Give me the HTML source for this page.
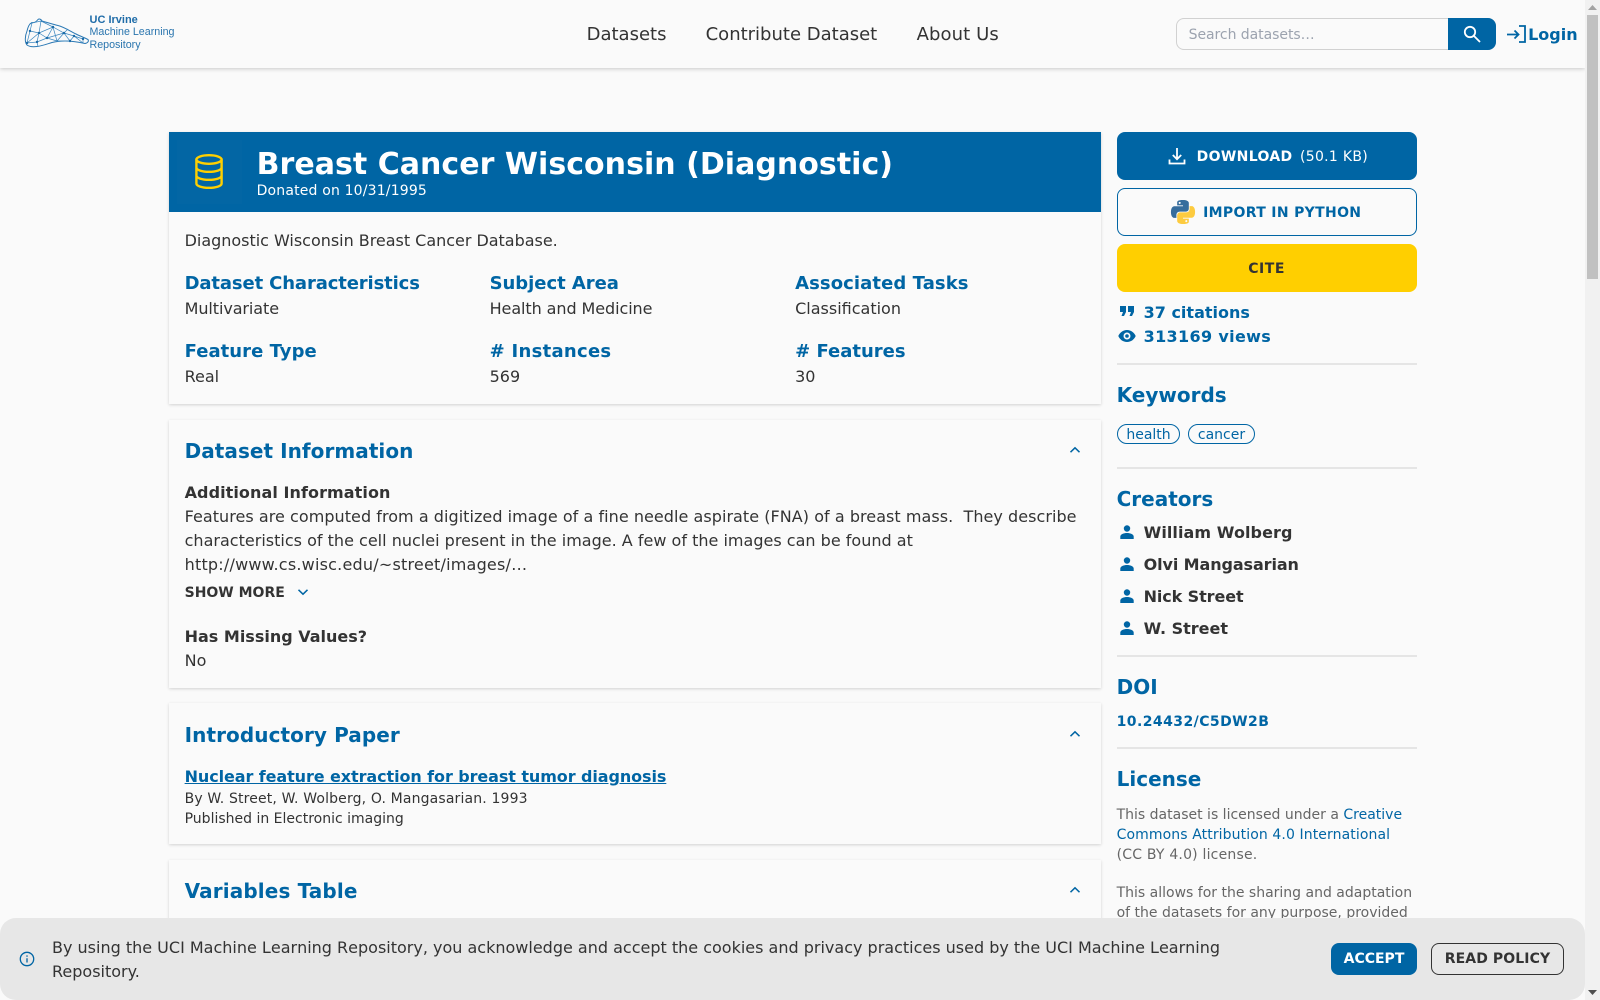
<!DOCTYPE html>
<html lang="en"><head><meta charset="utf-8"><title>Breast Cancer Wisconsin (Diagnostic)</title>
<style>
html,body{margin:0;padding:0;width:1600px;height:1000px;overflow:hidden;background:#fafafa}
body{position:relative;font-family:"DejaVu Sans",sans-serif;font-size:16px;color:#333}
#w{position:absolute;left:0;top:0;width:1600px;height:1000px;overflow:hidden}
.t{position:absolute;white-space:nowrap;line-height:24px;margin-top:1px;margin-left:-.4px}
.b{font-weight:700}
.h{font-weight:700;color:#0065a4;font-size:18px}
.h2{font-weight:700;color:#0065a4;font-size:20px;margin-top:0}
.s{font-size:14px}
.card{position:absolute;left:169px;width:932px;background:#fafafa;box-shadow:0 1px 3px rgba(0,0,0,.16)}
.btn{position:absolute;left:1117px;width:300px;height:48px;border-radius:8px;box-sizing:border-box}
.hr{position:absolute;left:1117px;width:300px;height:2px;background:#e5e5e5}
.blue{color:#0065a4}
svg{position:absolute;overflow:visible}
a{color:inherit}
</style></head><body><div id="w">

<div class="card" style="top:132px;height:272px"></div>
<div style="position:absolute;left:169px;top:132px;width:932px;height:80px;background:#0065a4"></div>
<div style="position:absolute;left:177px;top:140px;width:65px;height:64px;background:#0366a4"></div>
<svg style="left:195px;top:154px" width="28" height="35" viewBox="0 0 28 35" fill="none" stroke="#ffcf00" stroke-width="2.4"><ellipse cx="14" cy="5.5" rx="12.6" ry="4.3"/><path d="M1.4 5.5V29.5C1.4 32 7 33.8 14 33.8S26.6 32 26.6 29.5V5.5M1.4 13.5C1.4 16 7 17.8 14 17.8S26.6 16 26.6 13.5M1.4 21.5C1.4 24 7 25.8 14 25.8S26.6 24 26.6 21.5"/></svg>
<div class="t b" style="left:257px;top:146px;font-size:30px;line-height:36px;color:#fff;letter-spacing:.03px">Breast Cancer Wisconsin (Diagnostic)</div>
<div class="t s" style="left:257px;top:178px;color:#fff;letter-spacing:.17px">Donated on 10/31/1995</div>

<div class="t" style="left:185px;top:228px;letter-spacing:-.02px">Diagnostic Wisconsin Breast Cancer Database.</div>
<div class="t h" style="left:185px;top:271px;letter-spacing:-.133px">Dataset Characteristics</div>
<div class="t h" style="left:490px;top:271px;letter-spacing:-.04px">Subject Area</div>
<div class="t h" style="left:795.500px;top:271px;letter-spacing:.08px">Associated Tasks</div>
<div class="t" style="left:185px;top:296px;letter-spacing:-.08px">Multivariate</div>
<div class="t" style="left:490px;top:296px;letter-spacing:-.08px">Health and Medicine</div>
<div class="t" style="left:795.500px;top:296px">Classification</div>
<div class="t h" style="left:185px;top:339px;letter-spacing:.04px">Feature Type</div>
<div class="t h" style="left:490px;top:339px;letter-spacing:.28px"># Instances</div>
<div class="t h" style="left:795.500px;top:339px">&#35; Features</div>
<div class="t" style="left:185px;top:364px">Real</div>
<div class="t" style="left:490px;top:364px">569</div>
<div class="t" style="left:795.500px;top:364px">30</div>

<div class="card" style="top:420px;height:268px"></div>
<div class="t h2" style="left:185px;top:439px;letter-spacing:.05px">Dataset Information</div>
<svg style="left:1069px;top:444px" width="12" height="12" viewBox="0 0 12 12" fill="none" stroke="#0065a4" stroke-width="1.5"><path d="M1.5 8.2 6 3.8l4.5 4.4"/></svg>
<div class="t b" style="left:185px;top:480px;letter-spacing:.07px">Additional Information</div>
<div class="t" style="left:185px;top:504px;letter-spacing:.045px">Features are computed from a digitized image of a fine needle aspirate (FNA) of a breast mass.&nbsp; They describe</div>
<div class="t" style="left:185px;top:528px;letter-spacing:.01px">characteristics of the cell nuclei present in the image. A few of the images can be found at</div>
<div class="t" style="left:185px;top:552px;letter-spacing:.21px">http://www.cs.wisc.edu/~street/images/…</div>
<div class="t b s" style="left:185px;top:580px">SHOW MORE</div>
<svg style="left:297px;top:586px" width="12" height="12" viewBox="0 0 12 12" fill="none" stroke="#0065a4" stroke-width="1.5"><path d="M1.5 3.8 6 8.2l4.5-4.4"/></svg>
<div class="t b" style="left:185px;top:624px">Has Missing Values?</div>
<div class="t" style="left:185px;top:648px">No</div>

<div class="card" style="top:703px;height:141px"></div>
<div class="t h2" style="left:185px;top:723px;letter-spacing:.08px">Introductory Paper</div>
<svg style="left:1069px;top:728px" width="12" height="12" viewBox="0 0 12 12" fill="none" stroke="#0065a4" stroke-width="1.5"><path d="M1.5 8.2 6 3.8l4.5 4.4"/></svg>
<div class="t b blue" style="left:185px;top:764px;text-decoration:underline;letter-spacing:-.087px">Nuclear feature extraction for breast tumor diagnosis</div>
<div class="t s" style="left:185px;top:786px;letter-spacing:.15px">By W. Street, W. Wolberg, O. Mangasarian. 1993</div>
<div class="t s" style="left:185px;top:806px">Published in Electronic imaging</div>

<div class="card" style="top:860px;height:200px"></div>
<div class="t h2" style="left:185px;top:879px;letter-spacing:.13px">Variables Table</div>
<svg style="left:1069px;top:884px" width="12" height="12" viewBox="0 0 12 12" fill="none" stroke="#0065a4" stroke-width="1.5"><path d="M1.5 8.2 6 3.8l4.5 4.4"/></svg>

<!-- sidebar -->
<div class="btn" style="top:132px;background:#0065a4"></div>
<svg style="left:1168px;top:147px" width="18" height="18" viewBox="0 0 18 18" fill="none" stroke="#fff" stroke-width="1.8"><path d="M9 1v11M4.8 8 9 12.2 13.200 8M1.500 12.500V16.500H16.500V12.500"/></svg>
<div class="t s b" style="left:1197px;top:144px;color:#fff;letter-spacing:.35px">DOWNLOAD</div>
<div class="t s" style="left:1300.400px;top:144px;color:#fff;letter-spacing:.3px">(50.1 KB)</div>
<div class="btn" style="top:188px;border:1.300px solid #0065a4"></div>
<svg style="left:1171px;top:200px" width="24" height="24" viewBox="0 0 24 24"><path fill="#366d9d" fill-rule="evenodd" d="M14.25.18l.9.2.73.26.59.3.45.32.34.34.25.34.16.33.1.3.04.26.02.2-.01.13V8.5l-.05.63-.13.55-.21.46-.26.38-.3.31-.33.25-.35.19-.35.14-.33.1-.3.07-.26.04-.21.02H8.77l-.69.05-.59.14-.5.22-.41.27-.33.32-.27.35-.2.36-.15.37-.1.35-.07.32-.04.27-.02.21v3.06H3.17l-.21-.03-.28-.07-.32-.12-.35-.18-.36-.26-.36-.36-.35-.46-.32-.59-.28-.73-.21-.88-.14-1.05-.05-1.23.06-1.22.16-1.04.24-.87.32-.71.36-.57.4-.44.42-.33.42-.24.4-.16.36-.1.32-.05.24-.01h.16l.06.01h8.16v-.83H6.18l-.01-2.75-.02-.37.05-.34.11-.31.17-.28.25-.26.31-.23.38-.2.44-.18.51-.15.58-.12.64-.1.71-.06.77-.04.84-.02 1.27.05zm-6.3 1.98l-.23.33-.08.41.08.41.23.34.33.22.41.09.41-.09.33-.22.23-.34.08-.41-.08-.41-.23-.33-.33-.22-.41-.09-.41.09z"/><path fill="#fdcb3f" fill-rule="evenodd" d="M21.04 6.11l.28.06.32.12.35.18.36.27.36.35.35.47.32.59.28.73.21.88.14 1.04.05 1.23-.06 1.23-.16 1.04-.24.86-.32.71-.36.57-.4.45-.42.33-.42.24-.4.16-.36.09-.32.05-.24.02-.16-.01h-8.22v.82h5.84l.01 2.76.02.36-.05.34-.11.31-.17.29-.25.25-.31.24-.38.2-.44.17-.51.15-.58.13-.64.09-.71.07-.77.04-.84.01-1.27-.04-1.07-.14-.9-.2-.73-.25-.59-.3-.45-.33-.34-.34-.25-.34-.16-.33-.1-.3-.04-.25-.02-.2.01-.13v-5.34l.05-.64.13-.54.21-.46.26-.38.3-.32.33-.24.35-.2.35-.14.33-.1.3-.06.26-.04.21-.02.13-.01h5.84l.69-.05.59-.14.5-.21.41-.28.33-.32.27-.35.2-.36.15-.36.1-.35.07-.32.04-.28.02-.21V6.07h2.09l.14.01zm-6.47 14.25l-.23.33-.08.41.08.41.23.33.33.23.41.08.41-.08.33-.23.23-.33.08-.41-.08-.41-.23-.33-.33-.23-.41-.08-.41.08z"/></svg>
<div class="t s b blue" style="left:1203.500px;top:200px;letter-spacing:.33px">IMPORT IN PYTHON</div>
<div class="btn" style="top:244px;background:#ffcf00"></div>
<div class="t s b" style="left:1117px;width:300px;text-align:center;top:256px;color:#333;letter-spacing:.55px">CITE</div>

<svg style="left:1120px;top:306px" width="14" height="11" viewBox="0 0 14 11" fill="#0065a4"><path d="M0 0H6V6L4 10H1.500L3 6H0ZM8 0H14V6L12 10H9.500L11 6H8Z"/></svg>
<div class="t b blue" style="left:1144px;top:300px">37 citations</div>
<svg style="left:1118px;top:329px" width="18" height="14" viewBox="0 0 18 14"><path fill="#0065a4" fill-rule="evenodd" d="M9 1C5 1 1.800 3.500.300 7 1.800 10.500 5 13 9 13s7.200-2.500 8.700-6C16.200 3.500 13 1 9 1zm0 2.500a3.500 3.500 0 1 1 0 7 3.500 3.500 0 0 1 0-7zM9 5.200a1.800 1.800 0 1 0 0 3.600 1.800 1.800 0 0 0 0-3.600z"/></svg>
<div class="t b blue" style="left:1144px;top:324px;letter-spacing:.34px">313169 views</div>
<div class="hr" style="top:363px"></div>
<div class="t h2" style="left:1117px;top:383px">Keywords</div>
<div class="t s blue" style="left:1117px;top:424px;margin:0;width:63px;height:20px;line-height:20px;box-sizing:border-box;border:1px solid #0065a4;border-radius:10px;text-align:center">health</div>
<div class="t s blue" style="left:1188px;top:424px;margin:0;width:67px;height:20px;line-height:20px;box-sizing:border-box;border:1px solid #0065a4;border-radius:10px;text-align:center">cancer</div>
<div class="hr" style="top:467px"></div>
<div class="t h2" style="left:1117px;top:487px">Creators</div>
<svg style="left:1120px;top:525px" width="14" height="14" viewBox="0 0 14 14" fill="#0065a4"><circle cx="7" cy="3.500" r="3.200"/><path d="M.300 14V11.500C.300 9.200 4 8 7 8s6.700 1.200 6.700 3.500V14Z"/></svg>
<div class="t b" style="left:1144px;top:520px;letter-spacing:.07px">William Wolberg</div>
<svg style="left:1120px;top:557px" width="14" height="14" viewBox="0 0 14 14" fill="#0065a4"><circle cx="7" cy="3.500" r="3.200"/><path d="M.300 14V11.500C.300 9.200 4 8 7 8s6.700 1.200 6.700 3.500V14Z"/></svg>
<div class="t b" style="left:1144px;top:552px;letter-spacing:-.1px">Olvi Mangasarian</div>
<svg style="left:1120px;top:589px" width="14" height="14" viewBox="0 0 14 14" fill="#0065a4"><circle cx="7" cy="3.500" r="3.200"/><path d="M.300 14V11.500C.300 9.200 4 8 7 8s6.700 1.200 6.700 3.500V14Z"/></svg>
<div class="t b" style="left:1144px;top:584px;letter-spacing:-.1px">Nick Street</div>
<svg style="left:1120px;top:621px" width="14" height="14" viewBox="0 0 14 14" fill="#0065a4"><circle cx="7" cy="3.500" r="3.200"/><path d="M.300 14V11.500C.300 9.200 4 8 7 8s6.700 1.200 6.700 3.500V14Z"/></svg>
<div class="t b" style="left:1144px;top:616px">W. Street</div>
<div class="hr" style="top:655px"></div>
<div class="t h2" style="left:1117px;top:675px">DOI</div>
<div class="t s b blue" style="left:1117px;top:709px;letter-spacing:.44px">10.24432/C5DW2B</div>
<div class="hr" style="top:747px"></div>
<div class="t h2" style="left:1117px;top:767px">License</div>
<div class="t s" style="left:1117px;top:802px;color:#666">This dataset is licensed under a <span class="blue">Creative</span></div>
<div class="t s blue" style="left:1117px;top:822px;letter-spacing:.1px">Commons Attribution 4.0 International</div>
<div class="t s" style="left:1117px;top:842px;color:#666;letter-spacing:.2px">(CC BY 4.0) license.</div>
<div class="t s" style="left:1117px;top:880px;color:#666">This allows for the sharing and adaptation</div>
<div class="t s" style="left:1117px;top:900px;color:#666">of the datasets for any purpose, provided</div>

<!-- navbar -->
<div style="position:absolute;left:0;top:0;width:1585px;height:68px;background:#fafafa;box-shadow:0 1px 4px rgba(0,0,0,.2)"></div>
<svg style="left:25px;top:18px" width="65" height="31" viewBox="25 18 65 31" fill="none" stroke="#3a86bf" stroke-width=".7"><path stroke="#2a78b4" stroke-width="1" d="M27 45C24.500 42 25 36 27 31C28 27 29 24 32 22.500C34 23 36 22 38 19.500C39 18.500 41 19 42 21C48 23 53 24 58 25.500C64 27 70 31 76 34C80 36 85 38 88 39.500C89 41 88 43 85 43.500C78 42 71 41 65 41C60 41 56 41.500 52 42.500C47 44 42 46 37 46.500C33 47 29 46.500 27 45Z"/><path d="M30 31 39 33 53 27 64 33 74 36 83 39M30 31 27 43 37 42 47 38 64 33M39 33 37 42M39 33 47 38 53 27M39 33 41 21 53 27M30 31 32 23 41 21M27 43 39 33M53 27 57 41 64 33M47 38 57 41 70 41 64 33M70 41 74 36 83 43M74 36 83 43 83 39M37 42 38 46.500M64 33 68 29"/><g fill="#1d6ca8" stroke="none"><circle cx="30" cy="31" r="1.200"/><circle cx="39" cy="33" r="1.200"/><circle cx="53" cy="27" r="1.200"/><circle cx="27" cy="43" r="1.200"/><circle cx="37" cy="42" r="1.200"/><circle cx="47" cy="38" r="1.200"/><circle cx="64" cy="33" r="1.200"/><circle cx="70" cy="41" r="1.200"/><circle cx="74" cy="36" r="1.200"/><circle cx="83" cy="39" r="1.200"/></g></svg>
<div class="t" style="left:89.500px;top:13px;margin:0;font:700 11px/14px 'Liberation Sans',sans-serif;color:#1f6ca8">UC Irvine</div>
<div class="t" style="left:89.500px;top:25px;margin:0;font:10.700px/14px 'Liberation Sans',sans-serif;color:#2a75ae">Machine Learning</div>
<div class="t" style="left:89.500px;top:38px;margin:0;font:10.700px/14px 'Liberation Sans',sans-serif;color:#2a75ae">Repository</div>
<div class="t" style="left:587px;top:22px;font-size:18px">Datasets</div>
<div class="t" style="left:706px;top:22px;font-size:18px">Contribute Dataset</div>
<div class="t" style="left:917px;top:22px;font-size:18px;letter-spacing:.1px">About Us</div>
<div style="position:absolute;left:1176px;top:18px;width:320px;height:32px;box-sizing:border-box;border:1px solid #d1d1d1;border-radius:8px;background:#fafafa"></div>
<div class="t s" style="left:1189px;top:22px;color:#9ca3af;letter-spacing:-.05px">Search datasets…</div>
<div style="position:absolute;left:1448px;top:18px;width:48px;height:32px;background:#0065a4;border-radius:0 8px 8px 0"></div>
<svg style="left:1463px;top:25px" width="18" height="18" viewBox="0 0 18 18" fill="none" stroke="#fff" stroke-width="1.800"><circle cx="7" cy="7" r="5.200"/><path d="M11 11l6 6"/></svg>
<svg style="left:1507px;top:25px" width="19" height="18" viewBox="0 0 19 18" fill="none" stroke="#0065a4" stroke-width="1.800"><path d="M0 9.500H11M7.500 5.500 11.500 9.500 7.500 13.500M12 1H18V17H12"/></svg>
<div class="t b blue" style="left:1528.500px;top:22px;font-size:16px">Login</div>

<!-- scrollbar -->
<div style="position:absolute;left:1585px;top:0;width:15px;height:1000px;background:#f1f1f1"></div>
<div style="position:absolute;left:1587px;top:15px;width:11px;height:264px;background:#c1c1c1"></div>
<svg style="left:1588px;top:5px" width="9" height="5"><path d="M0 5 4.500 0 9 5Z" fill="#a3a3a3"/></svg>
<svg style="left:1588px;top:990px" width="9" height="5"><path d="M0 0 4.500 5 9 0Z" fill="#505050"/></svg>

<!-- banner -->
<div style="position:absolute;left:0;top:918px;width:1585px;height:82px;background:#e7e7e7;border-radius:16px"></div>
<svg style="left:19px;top:951px" width="16" height="16" viewBox="0 0 16 16" fill="none" stroke="#0065a4" stroke-width="1.300"><circle cx="8" cy="8" r="6.700"/><path d="M8 7.200V11.500M8 4.400V5.800"/></svg>
<div class="t" style="left:52.400px;top:935px;font-kerning:none">By using the UCI Machine Learning Repository, you acknowledge and accept the cookies and privacy practices used by the UCI Machine Learning</div>
<div class="t" style="left:52.400px;top:959px">Repository.</div>
<div class="t s b" style="left:1331px;top:943px;margin:0;width:86px;height:32px;line-height:33px;background:#0065a4;color:#fff;border-radius:8px;text-align:center">ACCEPT</div>
<div class="t s b" style="left:1431px;top:943px;margin:0;width:133px;height:32px;line-height:31px;box-sizing:border-box;border:1px solid #333;color:#333;border-radius:8px;text-align:center;letter-spacing:.1px">READ POLICY</div>
</div></body></html>
